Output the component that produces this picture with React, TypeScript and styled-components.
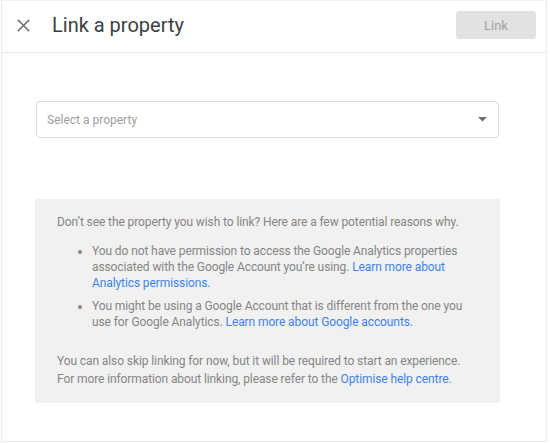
import React from "react";
import styled, { createGlobalStyle } from "styled-components";

const Global = createGlobalStyle`
  html, body { margin: 0; padding: 0; background: #fff; }
  body { font-family: Roboto, "Noto Sans", Arial, sans-serif; }
  * { box-sizing: border-box; }
`;

const Dialog = styled.div`
  width: 546px;
  height: 442px;
  margin-left: 1px;
  border: 1px solid #ececec;
  border-top-color: #f2f2f2;
  display: flex;
  flex-direction: column;
  background: #fff;
`;

const Header = styled.div`
  height: 52px;
  display: flex;
  align-items: center;
  padding: 0 10px 4px 13px;
  border-bottom: 1px solid #e6e6e6;
`;

const CloseButton = styled.button`
  width: 16px;
  height: 16px;
  padding: 0;
  border: none;
  background: none;
  display: flex;
  align-items: center;
  justify-content: center;
  margin-right: 21px;
  margin-top: 2px;
`;

const Title = styled.h1`
  margin: 0;
  flex: 1;
  font-family: Roboto, Arial, sans-serif;
  font-size: 20px;
  font-weight: 400;
  color: #3c4043;
`;

const LinkButton = styled.button`
  width: 80px;
  height: 28px;
  border: none;
  border-radius: 4px;
  background: #e2e2e2;
  color: #a3a3a3;
  font-family: Roboto, Arial, sans-serif;
  font-size: 13px;
  margin-top: 1px;
`;

const Body = styled.div`
  padding: 48px 46px 0 33px;
  display: flex;
  flex-direction: column;
`;

const Select = styled.div`
  height: 37px;
  margin: 0 1px;
  border: 1px solid #dcdcdc;
  border-radius: 4px;
  display: flex;
  align-items: center;
  padding: 0 11px 0 10px;
  justify-content: space-between;
`;

const Placeholder = styled.span`
  font-size: 12px;
  color: #a0a0a0;
`;

const Info = styled.div`
  margin-top: 61px;
  background: #f1f1f1;
  padding: 15px 22px 15px 22px;
  font-size: 12px;
  letter-spacing: -0.1px;
  color: #858585;
  line-height: 16px;
`;

const Para = styled.p<{ $lh?: number }>`
  margin: 0;
  line-height: ${(p) => p.$lh ?? 16}px;
`;

const List = styled.ul`
  margin: 13px 0 22px 0;
  padding-left: 35px;
  li { margin-bottom: 7px; }
  li:last-child { margin-bottom: 0; }
`;

const A = styled.a`
  color: #3f83e6;
  text-decoration: none;
`;

export default function App() {
  return (
    <>
      <Global />
      <Dialog>
        <Header>
          <CloseButton>
            <svg width="13" height="13" viewBox="0 0 13 13">
              <path d="M0.8 0.8 L12.2 12.2 M12.2 0.8 L0.8 12.2" stroke="#6e6e6e" strokeWidth="1.6" />
            </svg>
          </CloseButton>
          <Title>Link a property</Title>
          <LinkButton>Link</LinkButton>
        </Header>
        <Body>
          <Select>
            <Placeholder>Select a property</Placeholder>
            <svg width="9" height="5" viewBox="0 0 9 5">
              <path d="M0 0 L9 0 L4.5 4.5 Z" fill="#707070" />
            </svg>
          </Select>
          <Info>
            <Para>Don’t see the property you wish to link? Here are a few potential reasons why.</Para>
            <List>
              <li>
                You do not have permission to access the Google Analytics properties associated with the Google Account you’re using.{" "}
                <A href="#">Learn more about Analytics permissions.</A>
              </li>
              <li>
                You might be using a Google Account that is different from the one you use for Google Analytics.{" "}
                <A href="#">Learn more about Google accounts.</A>
              </li>
            </List>
            <Para $lh={18}>
              You can also skip linking for now, but it will be required to start an experience. For more information about linking, please refer to the{" "}
              <A href="#">Optimise help centre</A>.
            </Para>
          </Info>
        </Body>
      </Dialog>
    </>
  );
}
